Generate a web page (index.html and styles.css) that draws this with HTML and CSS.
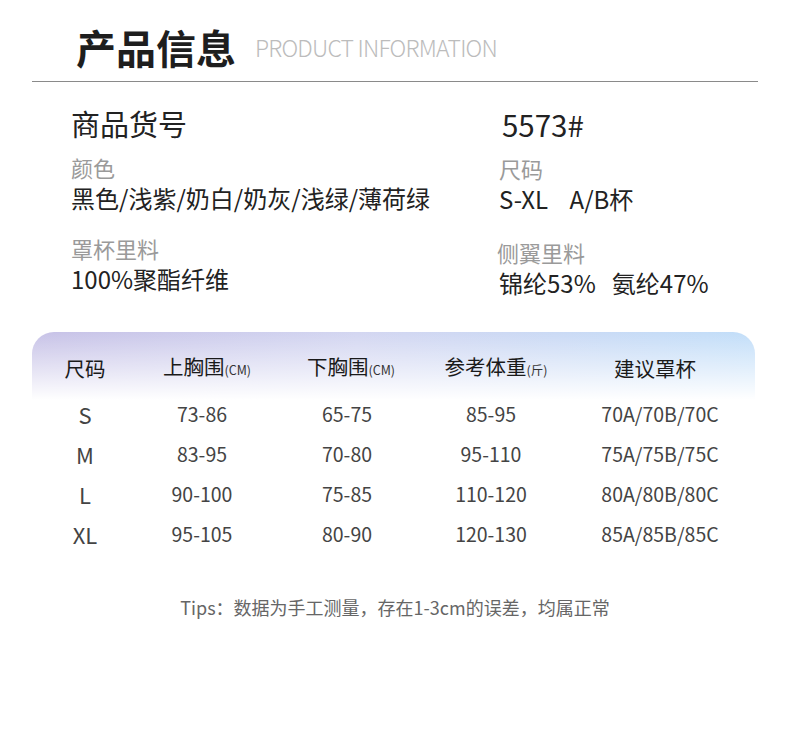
FILE: index.html
```html
<!DOCTYPE html>
<html lang="zh-CN">
<head>
<meta charset="utf-8">
<title>产品信息</title>
<link rel="stylesheet" href="styles.css">
</head>
<body>
<div class="page">
  <header class="head">
    <h1 class="title">产品信息</h1>
    <span class="subtitle">PRODUCT INFORMATION</span>
  </header>
  <div class="rule"></div>

  <section class="info">
    <div class="col col-left">
      <div class="code-label">商品货号</div>
      <div class="field">
        <div class="label">颜色</div>
        <div class="value">黑色/浅紫/奶白/奶灰/浅绿/薄荷绿</div>
      </div>
      <div class="field field-2">
        <div class="label">罩杯里料</div>
        <div class="value">100%聚酯纤维</div>
      </div>
    </div>
    <div class="col col-right">
      <div class="code">5573#</div>
      <div class="field">
        <div class="label">尺码</div>
        <div class="value">S-XL&nbsp;&nbsp;&nbsp;&nbsp;A/B杯</div>
      </div>
      <div class="field field-3">
        <div class="label label-shift">侧翼里料</div>
        <div class="value">锦纶53%&nbsp;&nbsp;&nbsp;氨纶47%</div>
      </div>
    </div>
  </section>

  <section class="size-table">
    <div class="row row-head">
      <div class="cell">尺码</div>
      <div class="cell shift-a">上胸围<small>(CM)</small></div>
      <div class="cell shift-b">下胸围<small>(CM)</small></div>
      <div class="cell shift-c">参考体重<small>(斤)</small></div>
      <div class="cell shift-d">建议罩杯</div>
    </div>
    <div class="row">
      <div class="cell cell-size">S</div>
      <div class="cell">73-86</div>
      <div class="cell">65-75</div>
      <div class="cell">85-95</div>
      <div class="cell">70A/70B/70C</div>
    </div>
    <div class="row">
      <div class="cell cell-size">M</div>
      <div class="cell">83-95</div>
      <div class="cell">70-80</div>
      <div class="cell">95-110</div>
      <div class="cell">75A/75B/75C</div>
    </div>
    <div class="row">
      <div class="cell cell-size">L</div>
      <div class="cell">90-100</div>
      <div class="cell">75-85</div>
      <div class="cell">110-120</div>
      <div class="cell">80A/80B/80C</div>
    </div>
    <div class="row">
      <div class="cell cell-size">XL</div>
      <div class="cell">95-105</div>
      <div class="cell">80-90</div>
      <div class="cell">120-130</div>
      <div class="cell">85A/85B/85C</div>
    </div>
  </section>

  <p class="tips">Tips：数据为手工测量，存在1-3cm的误差，均属正常</p>
</div>
</body>
</html>
```
FILE: styles.css
```css
* { box-sizing: border-box; }

html, body {
  margin: 0;
  padding: 0;
  background: #ffffff;
}

body {
  font-family: "Noto Sans CJK SC", "Noto Sans", sans-serif;
  color: #222222;
}

.page {
  width: 790px;
  height: 729px;
  overflow: hidden;
}

/* ---------- header ---------- */
.head {
  display: flex;
  align-items: center;
  height: 81px;
  padding: 13px 0 0 76px;
}

.title {
  margin: 0;
  font-size: 40px;
  line-height: 48px;
  font-weight: 700;
  color: #1e1e1e;
}

.subtitle {
  margin-left: 19px;
  font-size: 23px;
  line-height: 30px;
  font-weight: 300;
  color: #bcbcbc;
  letter-spacing: -0.8px;
}

.rule {
  margin: 0 32px;
  height: 1px;
  background: #8a8a8a;
}

/* ---------- info ---------- */
.info {
  display: grid;
  grid-template-columns: 428px 1fr;
  padding: 24px 0 0 71px;
  height: 250px;
}

.col-right {
  padding-top: 1px;
}

.code-label {
  font-size: 29px;
  line-height: 34px;
  color: #222;
}

.code {
  margin-left: 3px;
  font-size: 29.5px;
  line-height: 34px;
  color: #222;
}

.field {
  margin-top: 15px;
}

.field-2 {
  margin-top: 24px;
}

.field-3 {
  margin-top: 27px;
}

.label {
  font-size: 22px;
  line-height: 24px;
  color: #9a9a9a;
}

.label-shift {
  margin-left: -2px;
}

.value {
  margin-top: 5px;
  font-size: 24px;
  line-height: 28px;
  color: #222;
}

/* ---------- table ---------- */
.size-table {
  margin: 0 35px 0 32px;
  border-radius: 22px 22px 0 0;
  background:
    linear-gradient(to bottom, rgba(255,255,255,0) 0px, rgba(255,255,255,0.55) 38px, #ffffff 68px),
    linear-gradient(to right, #c7c2e7 0%, #d3d6f1 45%, #c2def9 100%);
}

.row {
  display: grid;
  grid-template-columns: 106px 128px 162px 126px 212px;
  height: 40px;
  align-items: center;
}

.row-head {
  height: 62px;
  padding-top: 10px;
}

.cell {
  text-align: center;
  font-size: 19.5px;
  line-height: 28px;
  color: #444;
  white-space: nowrap;
}

.row-head .cell {
  font-size: 20.5px;
  color: #1a1a1a;
}

.row-head small {
  font-size: 12.5px;
  color: #333;
}

.row-head .shift-a { padding-left: 10px; }
.row-head .shift-b { padding-left: 8px; }
.row-head .shift-c { padding-left: 10px; }
.row-head .shift-d { padding-right: 10px; }

.cell-size {
  font-size: 22px;
}

/* ---------- tips ---------- */
.tips {
  margin: 41px 0 0 0;
  text-align: center;
  font-size: 18px;
  line-height: 24px;
  color: #666;
}
```
